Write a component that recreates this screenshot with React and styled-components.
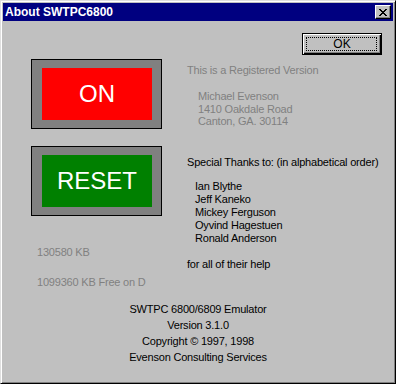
import React from "react";
import styled, { createGlobalStyle } from "styled-components";

const GlobalStyle = createGlobalStyle`
  html, body {
    margin: 0;
    padding: 0;
    background: #c0c0c0;
  }
  body {
    font-family: "Liberation Sans", Arial, sans-serif;
  }
`;

const Window = styled.div`
  box-sizing: border-box;
  width: 396px;
  height: 384px;
  padding: 2px;
  background: #c0c0c0;
  border: 1px solid;
  border-color: #dfdfdf #000 #000 #dfdfdf;
  box-shadow: inset 1px 1px #fff, inset -1px -1px #808080;
  display: flex;
  flex-direction: column;
`;

const TitleBar = styled.div`
  height: 18px;
  background: #000080;
  display: flex;
  align-items: center;
  padding: 0 2px;
`;

const Title = styled.span`
  flex: 1;
  color: #fff;
  font-size: 12px;
  font-weight: bold;
  line-height: 18px;
`;

const CloseButton = styled.div`
  box-sizing: border-box;
  width: 16px;
  height: 14px;
  background: #c0c0c0;
  border: 1px solid;
  border-color: #fff #000 #000 #fff;
  box-shadow: inset -1px -1px #808080;
  display: flex;
  align-items: center;
  justify-content: center;
  padding-right: 1px;
`;

const Body = styled.div`
  display: flex;
  flex-direction: column;
  font-size: 11px;
  letter-spacing: -0.2px;
`;

const TopRow = styled.div`
  display: flex;
  justify-content: flex-end;
  padding: 12px 11px 0 0;
`;

const OkButton = styled.div`
  box-sizing: border-box;
  width: 80px;
  height: 22px;
  border: 1px solid #000;
  background: #c0c0c0;
  box-shadow: inset 1px 1px #fff, inset -1px -1px #000, inset -2px -2px #808080;
  display: flex;
  align-items: center;
  justify-content: center;
  position: relative;
  font-size: 12px;
  letter-spacing: 0;

  &::after {
    content: "";
    position: absolute;
    inset: 3px 4px 3px 3px;
    border: 1px dotted #000;
  }
`;

const Main = styled.div`
  display: flex;
  padding: 4px 0 0 28px;
`;

const LeftCol = styled.div`
  width: 131px;
  display: flex;
  flex-direction: column;
`;

const PowerBox = styled.div`
  box-sizing: border-box;
  width: 131px;
  height: 70px;
  border: 1px solid #000;
  background: #808080;
  padding: 8px 9px 8px 10px;
  margin-top: ${(p) => p.$gap || 0}px;
`;

const Lamp = styled.div`
  height: 52px;
  background: ${(p) => p.$color};
  color: #fff;
  font-size: 24px;
  letter-spacing: 0;
  display: flex;
  align-items: center;
  justify-content: center;
`;

const MemLine = styled.div`
  color: #808080;
  line-height: 13px;
  margin: ${(p) => p.$top}px 0 0 6px;
  white-space: nowrap;
`;

const RightCol = styled.div`
  margin-left: 25px;
  padding-top: 5px;
  display: flex;
  flex-direction: column;
`;

const Line = styled.div`
  color: ${(p) => (p.$gray ? "#808080" : "#000")};
  line-height: ${(p) => p.$lh || 13}px;
  margin-top: ${(p) => p.$top || 0}px;
  margin-left: ${(p) => p.$indent || 0}px;
  white-space: nowrap;
`;

const Footer = styled.div`
  margin-top: 12px;
  text-align: center;
  line-height: 16px;
  color: #000;
`;

export default function App() {
  return (
    <>
      <GlobalStyle />
      <Window>
        <TitleBar>
          <Title>About SWTPC6800</Title>
          <CloseButton>
            <svg width="8" height="7" viewBox="0 0 8 7">
              <path
                d="M0 0h2v1h1v1h2v-1h1v-1h2v1h-1v1h-1v1h-1v1h1v1h1v1h1v1h-2v-1h-1v-1h-2v1h-1v1h-2v-1h1v-1h1v-1h1v-1h-1v-1h-1v-1h-1z"
                fill="#000"
              />
            </svg>
          </CloseButton>
        </TitleBar>
        <Body>
          <TopRow>
            <OkButton>OK</OkButton>
          </TopRow>
          <Main>
            <LeftCol>
              <PowerBox>
                <Lamp $color="#ff0000">ON</Lamp>
              </PowerBox>
              <PowerBox $gap={17}>
                <Lamp $color="#008000">RESET</Lamp>
              </PowerBox>
              <MemLine $top={30}>130580 KB</MemLine>
              <MemLine $top={17}>1099360 KB Free on D</MemLine>
            </LeftCol>
            <RightCol>
              <Line $gray>This is a Registered Version</Line>
              <Line $gray $lh={12.5} $top={13} $indent={11}>
                Michael Evenson
              </Line>
              <Line $gray $lh={12.5} $indent={11}>
                1410 Oakdale Road
              </Line>
              <Line $gray $lh={12.5} $indent={11}>
                Canton, GA. 30114
              </Line>
              <Line $top={28}>Special Thanks to: (in alphabetical order)</Line>
              <Line $top={11} $indent={8}>Ian Blythe</Line>
              <Line $indent={8}>Jeff Kaneko</Line>
              <Line $indent={8}>Mickey Ferguson</Line>
              <Line $indent={8}>Oyvind Hagestuen</Line>
              <Line $indent={8}>Ronald Anderson</Line>
              <Line $top={13}>for all of their help</Line>
            </RightCol>
          </Main>
          <Footer>
            <div>SWTPC 6800/6809 Emulator</div>
            <div>Version 3.1.0</div>
            <div>Copyright © 1997, 1998</div>
            <div>Evenson Consulting Services</div>
          </Footer>
        </Body>
      </Window>
    </>
  );
}
